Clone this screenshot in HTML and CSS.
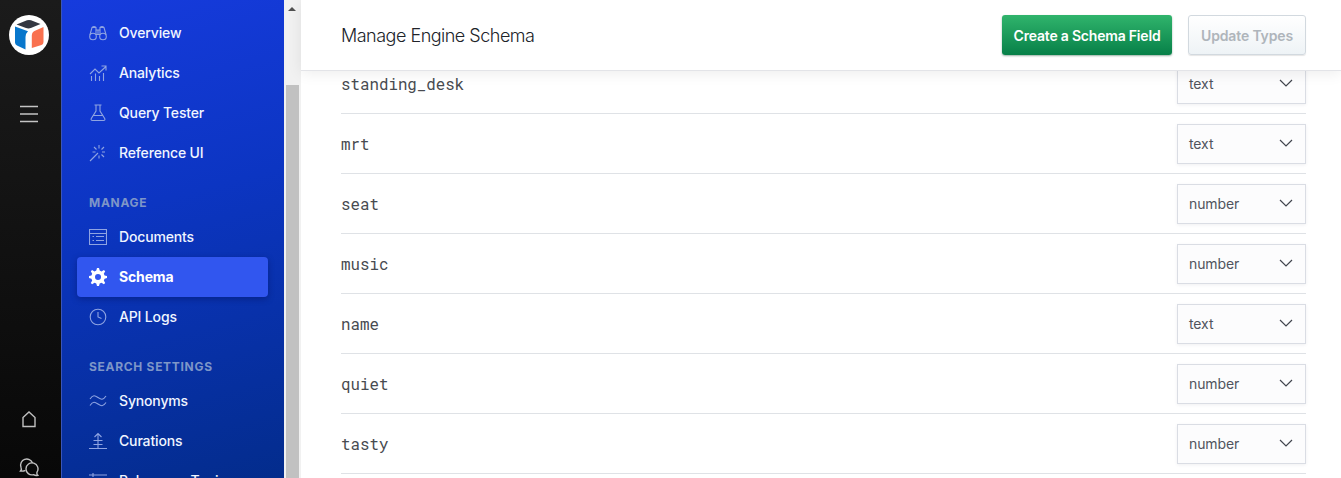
FILE: index.html
```html
<!DOCTYPE html>
<html lang="en">
<head>
<meta charset="utf-8">
<title>Manage Engine Schema</title>
<link rel="stylesheet" href="styles.css">
</head>
<body>
<div class="app">
  <aside class="rail">
    <svg class="logo" viewBox="0 0 40 40"><circle cx="20" cy="20" r="20" fill="#fff"/><path d="M7.500 9.500 18 5.200Q20 4.600 22 5.200L31.500 9 22.500 12.800Q19.500 14 17 13Z" fill="#343741"/><path d="M6 11.500 19 16.200Q16.500 18.500 16.500 22V34.500L8 30.500Q6 29.500 6 27.500Z" fill="#0877cc"/><path d="M22.800 20.500Q23 17 26 15.800L34.500 12V27Q34.500 29.500 32.500 30L22.800 33Z" fill="#f9714f"/></svg>
    <svg class="burger" viewBox="0 0 18 16"><path d="M0 .5H18M0 8H18M0 15.500H18"/></svg>
    <div class="rail-foot">
      <svg class="rail-icon" viewBox="0 0 20 20"><path d="M4 8.500 10 3l6 5.500v9H4Z"/></svg>
      <svg class="rail-icon" viewBox="0 0 20 20"><path d="M6.500 13.300Q4 14.500 1.500 14 3 12.500 2 10.200A6 6 0 1 1 13.500 6"/><path d="M18 15.200A6 6 0 1 0 14.500 17.700Q16.500 18.800 18.800 18.300 17.500 17 18 15.200Z"/></svg>
    </div>
  </aside>

  <nav class="sidebar">
    <a class="item"><svg viewBox="0 0 18 18"><circle cx="4" cy="12.500" r="3.300"/><circle cx="14" cy="12.500" r="3.300"/><path d="M.9 11 3 3.500Q5 1.500 7 3.500V11M17.100 11 15 3.500Q13 1.500 11 3.500V11M7 6h4M7 10.500h4M3 3.500h4M11 3.500h4M9 6v4.500"/></svg><span>Overview</span></a>
    <a class="item"><svg viewBox="0 0 18 18"><path d="M1 10 6 5l4 4 7-6.500M12.500 2H17v4.500M2.500 12v5M6.500 9.500V17M10.500 12v5M14.500 9v8"/></svg><span>Analytics</span></a>
    <a class="item"><svg viewBox="0 0 18 18"><path d="M5.500 1h7M7 1V7L2.300 14.500Q1.500 16.500 3.500 16.500H14.500Q16.500 16.500 15.700 14.500L11 7V1M4.500 11.500h9"/></svg><span>Query Tester</span></a>
    <a class="item"><svg viewBox="0 0 18 18"><path d="M1 17 9 9M10 1v3.500M5 3l2.500 2.500M3.500 8h3M15 3l-2.500 2.500M13 8H16M12.500 10.500l2.500 2.500M10 11.500v3"/></svg><span>Reference UI</span></a>
    <h2 class="group">MANAGE</h2>
    <a class="item"><svg viewBox="0 0 18 18"><path d="M.5 1.500h17v15H.5ZM.5 5.500h17M7 8.500h8M7 12.500h8M3.500 8.500H5M3.500 12.500H5"/></svg><span>Documents</span></a>
    <a class="item active"><svg viewBox="0 0 18 18"><path class="gear" fill-rule="evenodd" d="M8 0h2l.7 2.600 1.800.8 2.400-1.400 1.300 1.300-1.400 2.400.8 1.800L18 8v2l-2.400.7-.8 1.800 1.400 2.400-1.300 1.300-2.400-1.400-1.800.8L10 18H8l-.7-2.400-1.800-.8-2.400 1.400-1.300-1.300 1.400-2.400-.8-1.800L0 10V8l2.400-.5.8-1.800L1.800 3.300 3.100 2l2.400 1.400 1.800-.8ZM9 6a3 3 0 1 0 0 6 3 3 0 0 0 0-6Z"/></svg><span>Schema</span></a>
    <a class="item"><svg viewBox="0 0 18 18"><circle cx="9" cy="9" r="7.800"/><path d="M9 4v5l3.500 1.500"/></svg><span>API Logs</span></a>
    <h2 class="group">SEARCH SETTINGS</h2>
    <a class="item"><svg viewBox="0 0 18 18"><path d="M1 7C4 2.500 6 3.500 9 5.500S14 8.500 17 4M1 13.500C4 9 6 10 9 12S14 15 17 10.500"/></svg><span>Synonyms</span></a>
    <a class="item"><svg viewBox="0 0 18 18"><path d="M0 16.500h18M9 16.500V1.500M5.500 5 9 1.500l3.500 3.500M4.500 8.500h9M4.500 12.500h9"/></svg><span>Curations</span></a>
    <a class="item"><svg viewBox="0 0 18 18"><path d="M0 3h18M4 1v4M0 9h18M13 7v4M0 15h18M6 13v4"/></svg><span>Relevance Tuning</span></a>
  </nav>

  <div class="scrollbar"><i class="arrow"></i><i class="thumb"></i></div>

  <main class="main">
    <header class="header">
      <h1>Manage Engine Schema</h1>
      <button class="btn primary">Create a Schema Field</button>
      <button class="btn disabled">Update Types</button>
    </header>
    <div class="rows">
      <div class="row"><span>standing_desk</span><div class="select">text<svg viewBox="0 0 14 8"><path d="M1 1l6 6 6-6"/></svg></div></div>
      <div class="row"><span>mrt</span><div class="select">text<svg viewBox="0 0 14 8"><path d="M1 1l6 6 6-6"/></svg></div></div>
      <div class="row"><span>seat</span><div class="select">number<svg viewBox="0 0 14 8"><path d="M1 1l6 6 6-6"/></svg></div></div>
      <div class="row"><span>music</span><div class="select">number<svg viewBox="0 0 14 8"><path d="M1 1l6 6 6-6"/></svg></div></div>
      <div class="row"><span>name</span><div class="select">text<svg viewBox="0 0 14 8"><path d="M1 1l6 6 6-6"/></svg></div></div>
      <div class="row"><span>quiet</span><div class="select">number<svg viewBox="0 0 14 8"><path d="M1 1l6 6 6-6"/></svg></div></div>
      <div class="row"><span>tasty</span><div class="select">number<svg viewBox="0 0 14 8"><path d="M1 1l6 6 6-6"/></svg></div></div>
    </div>
  </main>
</div>
</body>
</html>
```

FILE: styles.css
```css
* { box-sizing: border-box; }
body { margin: 0; font-family: Inter, "Liberation Sans", sans-serif; overflow: hidden; background: #fff; }
svg { fill: none; flex: none; }
.app { display: flex; height: 478px; overflow: hidden; }

.rail {
  width: 61px; flex: none; padding: 15px 3px 1px 0;
  display: flex; flex-direction: column; align-items: center;
  background: linear-gradient(#1b1b1b, #080808);
}
.logo { width: 40px; height: 40px; }
.burger { width: 18px; height: 16px; margin-top: 51px; stroke: #c4c4c4; stroke-width: 1.5; overflow: visible; }
.rail-foot { margin-top: auto; display: flex; flex-direction: column; gap: 28px; }
.rail-icon { width: 20px; height: 20px; stroke: #c0c0c0; stroke-width: 1.4; }

.sidebar {
  width: 223px; flex: none; padding: 13px 16px 0 15px;
  border-left: 1px solid #3a55b8;
  background: linear-gradient(165deg, #163bdd 0%, #0c35c2 42%, #032c8c 100%);
}
.item {
  display: flex; align-items: center; gap: 12px; height: 40px; padding-left: 12px;
  color: #f0f5ff; font-size: 14px; font-weight: 500; letter-spacing: -.15px; white-space: nowrap;
}
.item span { padding-bottom: 2px; }
.item svg { width: 18px; height: 18px; stroke: #8fa4e2; stroke-width: 1.1; }
.item.active { background: #3156ef; border-radius: 4px; color: #fff; font-weight: 700; box-shadow: 0 2px 6px rgba(0, 10, 70, .35); }
.item .gear { fill: #fff; stroke: none; }
.group {
  margin: 0; height: 44px; padding: 22px 0 0 12px;
  font-size: 12px; line-height: 15px; font-weight: 700; letter-spacing: .7px; color: #7e96c8;
}

.scrollbar { width: 17px; flex: none; padding: 7px 2px 0 2px; background: #f1f1f1; display: flex; flex-direction: column; align-items: center; }
.arrow { width: 8px; height: 4px; margin-right: 1px; border: 4px solid transparent; border-top: 0; border-bottom: 4px solid #505050; }
.thumb { width: 13px; flex: 1; margin-top: 74px; background: #c1c1c1; }

.main { flex: 1; min-width: 0; }
.header {
  position: relative; z-index: 1; height: 71px; padding: 0 35px 0 40px;
  display: flex; align-items: center; gap: 16px; background: #fff;
  border-bottom: 1px solid #e3e4e8; box-shadow: 0 2px 14px rgba(0, 0, 0, .08);
}
h1 { margin: 0 auto 0 0; font-size: 18px; font-weight: 300; letter-spacing: -.5px; color: #202329; }
.btn { height: 40px; border-radius: 3px; font: 600 14px Inter, sans-serif; padding: 0; }
.primary { width: 170px; border: 0; color: #fff; letter-spacing: -.2px; background: linear-gradient(#30b46c, #078048); box-shadow: 0 1px 2px rgba(0, 60, 30, .4); }
.disabled { width: 118px; border: 1px solid #d2d9df; color: #afb5bb; letter-spacing: -.15px; background: linear-gradient(#fff, #eef3f6); box-shadow: 0 1px 1px rgba(0, 0, 0, .1); }

.rows { margin: -17px 35px 0 40px; }
.row {
  display: flex; align-items: center; justify-content: space-between;
  height: 60px; border-bottom: 1px solid #dfe2e6;
  font-family: "Roboto Mono", "Liberation Mono", monospace; font-size: 15.8px; color: #484b50;
}
.select {
  width: 129px; height: 40px; padding: 0 12px 0 11px;
  display: flex; align-items: center; justify-content: space-between;
  border: 1px solid #dadde4; background: #fcfcfd; box-shadow: 0 1px 3px rgba(60, 70, 90, .08);
  font: 400 14px Inter, sans-serif; letter-spacing: -.1px; color: #50545e;
}
.select svg { width: 14px; height: 8px; margin-bottom: 2px; stroke: #42464e; stroke-width: 1.2; }
```
